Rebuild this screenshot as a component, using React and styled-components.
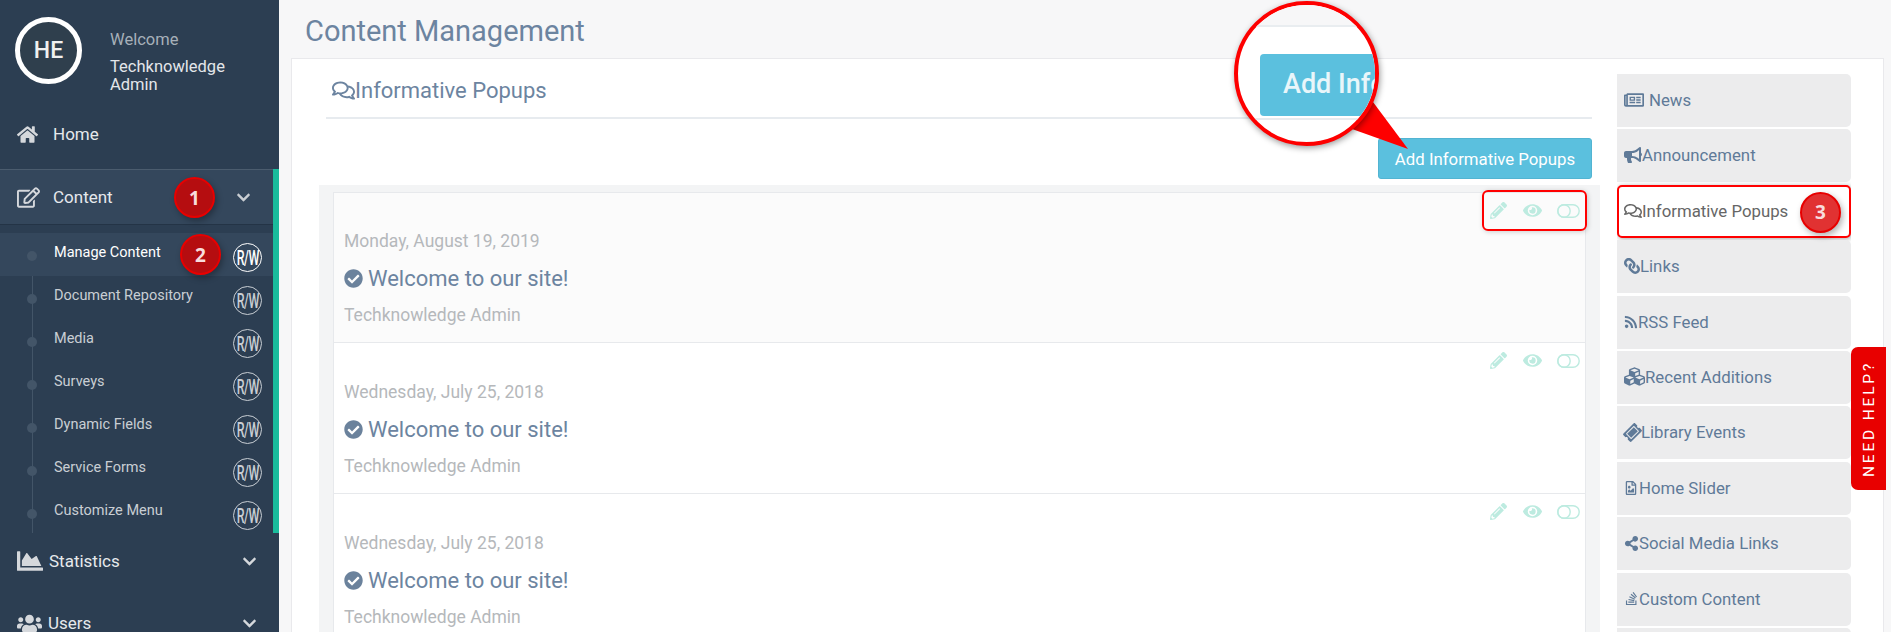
import React from 'react'
import styled, { createGlobalStyle } from 'styled-components'
import {
  FaHome, FaRegEdit, FaChevronDown, FaChartArea, FaUsers, FaRegNewspaper, FaBullhorn,
  FaRegComments, FaLink, FaRss, FaCubes, FaTicketAlt, FaRegFileImage, FaShareAlt,
  FaStackOverflow, FaPencilAlt, FaEye, FaCheckCircle,
} from 'react-icons/fa'

const subMenu = ['Manage Content', 'Document Repository', 'Media', 'Surveys', 'Dynamic Fields', 'Service Forms', 'Customize Menu']

const tabs = [
  { label: 'News', icon: FaRegNewspaper, width: 20, gap: 5 },
  { label: 'Announcement', icon: FaBullhorn, width: 18 },
  { label: 'Informative Popups', icon: FaRegComments, width: 18, active: true },
  { label: 'Links', icon: FaLink, width: 16, turn: 'scaleX(-1)' },
  { label: 'RSS Feed', icon: FaRss, width: 14 },
  { label: 'Recent Additions', icon: FaCubes, width: 21 },
  { label: 'Library Events', icon: FaTicketAlt, width: 17, turn: 'rotate(-45deg)' },
  { label: 'Home Slider', icon: FaRegFileImage, width: 14, gap: 1 },
  { label: 'Social Media Links', icon: FaShareAlt, width: 15 },
  { label: 'Custom Content', icon: FaStackOverflow, width: 15 },
  { label: '', icon: null },
]

const posts = [
  { date: 'Monday, August 19, 2019', first: true },
  { date: 'Wednesday, July 25, 2018' },
  { date: 'Wednesday, July 25, 2018' },
]

function ToggleIcon() {
  return (
    <svg width="23" height="14" viewBox="0 0 23 14" fill="none" stroke="#bdebe0" strokeWidth="1.4">
      <rect x="0.8" y="0.8" width="21.4" height="12.4" rx="6.2" />
      <circle cx="7" cy="7" r="6.2" />
    </svg>
  )
}

function App() {
  return (
    <Page>
      <GlobalStyle />
      <Sidebar>
        <Profile>
          <Avatar>HE</Avatar>
          <ProfileText>
            <Welcome>Welcome</Welcome>
            <UserName>Techknowledge Admin</UserName>
          </ProfileText>
        </Profile>

        <HomeRow>
          <FaHome size={21} />
          <span>Home</span>
        </HomeRow>

        <ContentGroup>
          <ContentRow>
            <FaRegEdit size={23} />
            <span>Content</span>
            <Chevron $x={243}><FaChevronDown size={15} /></Chevron>
            <Badge $left={174} $top={7}>1</Badge>
          </ContentRow>
          <SubList>
            {subMenu.map((name, i) => (
              <SubItem key={name} $active={i === 0}>
                <SubDot />
                <SubLabel $active={i === 0}>{name}</SubLabel>
                <RwBadge $active={i === 0}><span>R/W</span></RwBadge>
                {i === 0 && <Badge $left={180} $top={1}>2</Badge>}
              </SubItem>
            ))}
          </SubList>
        </ContentGroup>

        <MainRow>
          <FaChartArea size={26} />
          <span>Statistics</span>
          <Chevron $x={249}><FaChevronDown size={15} /></Chevron>
        </MainRow>
        <MainRow>
          <FaUsers size={25} />
          <span>Users</span>
          <Chevron $x={249}><FaChevronDown size={15} /></Chevron>
        </MainRow>
      </Sidebar>

      <Main>
        <PageTitle>Content Management</PageTitle>
        <Panel>
          <LeftColumn>
            <SectionHead>
              <FaRegComments size={23} />
              <span>Informative Popups</span>
            </SectionHead>
            <ButtonRow>
              <AddButton>Add Informative Popups</AddButton>
            </ButtonRow>
            <PostList>
              {posts.map((post, i) => (
                <Post key={i} $first={post.first}>
                  <PostActions>
                    <FaPencilAlt size={17} />
                    <FaEye size={19} />
                    <ToggleIcon />
                  </PostActions>
                  {post.first && <ActionsMark />}
                  <PostDate>{post.date}</PostDate>
                  <PostTitle>
                    <FaCheckCircle size={19} />
                    <span>Welcome to our site!</span>
                  </PostTitle>
                  <PostAuthor>Techknowledge Admin</PostAuthor>
                </Post>
              ))}
            </PostList>
          </LeftColumn>

          <TabColumn>
            {tabs.map((tab, i) => (
              <Tab key={i} $active={tab.active} $turn={tab.turn} $iconWidth={tab.width}>
                {tab.icon && <tab.icon />}
                <TabLabel $gap={tab.gap}>{tab.label}</TabLabel>
                {tab.active && <Badge $left={181} $top={5} $light>3</Badge>}
              </Tab>
            ))}
          </TabColumn>
        </Panel>
      </Main>

      <HelpTab><span>NEED HELP?</span></HelpTab>

      <CalloutArrow width="60" height="50" viewBox="0 0 60 50">
        <polygon points="22,0 1,27 57,47" fill="#fe0000" />
      </CalloutArrow>
      <Lens>
        <LensBand />
        <LensButton>Add Info</LensButton>
        <LensRule />
      </Lens>
    </Page>
  )
}

export default App

const GlobalStyle = createGlobalStyle`
  html, body {
    margin: 0;
    padding: 0;
    height: 100%;
    overflow: hidden;
  }
  body {
    font-family: Roboto, "Liberation Sans", sans-serif;
    background: #f7f7f8;
  }
  * { box-sizing: border-box; }
`

const Page = styled.div`
  position: relative;
  display: flex;
  width: 1891px;
  height: 632px;
  overflow: hidden;
`

const Sidebar = styled.aside`
  width: 279px;
  flex-shrink: 0;
  background: #2c3e52;
  color: #e6e9ec;
`

const Profile = styled.div`
  display: flex;
  height: 113px;
  padding: 17px 0 0 15px;
`

const Avatar = styled.div`
  width: 67px;
  height: 67px;
  border: 5px solid #fff;
  border-radius: 50%;
  background: #2f3f4d;
  color: #f0f0f0;
  display: flex;
  align-items: center;
  justify-content: center;
  font-size: 23px;
  font-weight: 500;
`

const ProfileText = styled.div`
  margin-left: 28px;
  padding-top: 14px;
  width: 130px;
`

const Welcome = styled.div`
  font-size: 16.5px;
  line-height: 18px;
  color: #a7b0b9;
  margin-bottom: 9px;
`

const UserName = styled.div`
  font-size: 16.5px;
  line-height: 18px;
  color: #e3e6ea;
`

const HomeRow = styled.div`
  display: flex;
  align-items: center;
  height: 56px;
  padding: 0 0 14px 17px;
  font-size: 17px;
  svg { color: #d5d8dc; margin-right: 15px; }
`

const ContentGroup = styled.div`
  border-right: 6px solid #1abc9c;
`

const ContentRow = styled.div`
  position: relative;
  display: flex;
  align-items: center;
  height: 56px;
  padding-left: 17px;
  background: #34475c;
  border-top: 1px solid #4b5c6e;
  border-bottom: 1px solid #243446;
  font-size: 17px;
  svg { color: #d5d8dc; margin-right: 13px; }
`

const Chevron = styled.span`
  position: absolute;
  left: ${(p) => p.$x - 7}px;
  top: 50%;
  margin-top: -7px;
  height: 15px;
  svg { display: block; color: #c9ced3; margin: 0; }
`

const Badge = styled.span`
  position: absolute;
  left: ${(p) => p.$left}px;
  top: ${(p) => p.$top}px;
  width: 41px;
  height: 41px;
  border-radius: 50%;
  border: 2px solid #e80000;
  background: ${(p) => (p.$light ? '#e13232' : '#b50d10')};
  color: #f8dcdc;
  font-size: 19px;
  font-weight: 700;
  font-family: "Open Sans", Roboto, sans-serif;
  display: flex;
  align-items: center;
  justify-content: center;
  box-shadow: 2px 3px 6px rgba(0, 0, 0, 0.3);
  z-index: 2;
`

const SubList = styled.div`
  position: relative;
  height: 308px;
  padding-top: 8px;
  &::before {
    content: '';
    position: absolute;
    left: 32px;
    top: 8px;
    bottom: 0;
    width: 1px;
    background: #435568;
  }
`

const SubItem = styled.div`
  position: relative;
  display: flex;
  align-items: center;
  height: 43px;
  padding-left: 54px;
  padding-bottom: 4px;
  background: ${(p) => (p.$active ? '#34475c' : 'transparent')};
`

const SubDot = styled.span`
  position: absolute;
  left: 27px;
  top: 18px;
  width: 10px;
  height: 10px;
  border-radius: 50%;
  background: #435568;
`

const SubLabel = styled.span`
  font-size: 14.5px;
  color: ${(p) => (p.$active ? '#fff' : '#c9ced4')};
`

const RwBadge = styled.span`
  position: absolute;
  left: 233px;
  top: 10px;
  width: 29px;
  height: 29px;
  border-radius: 50%;
  border: 1.5px solid ${(p) => (p.$active ? '#fff' : '#c9ced4')};
  color: ${(p) => (p.$active ? '#fff' : '#c9ced4')};
  display: flex;
  align-items: center;
  justify-content: center;
  span {
    font-size: 20px;
    font-weight: 500;
    transform: scaleX(0.62);
    white-space: nowrap;
    letter-spacing: -0.8px;
  }
`

const MainRow = styled.div`
  position: relative;
  display: flex;
  align-items: center;
  height: 56px;
  margin-bottom: 6px;
  padding-left: 17px;
  font-size: 17px;
  svg { color: #d5d8dc; margin-right: 6px; }
`

const Main = styled.main`
  flex: 1;
  min-width: 0;
  padding-left: 12px;
`

const PageTitle = styled.h1`
  margin: 0;
  height: 58px;
  padding: 13px 0 0 14px;
  font-size: 29px;
  line-height: 36px;
  font-weight: 400;
  color: #6c84a0;
`

const Panel = styled.section`
  display: flex;
  width: 1593px;
  height: 600px;
  background: #fff;
  border: 1px solid #e9e9ec;
`

const LeftColumn = styled.div`
  width: 1325px;
  flex-shrink: 0;
`

const SectionHead = styled.div`
  display: flex;
  align-items: center;
  margin: 0 25px 0 34px;
  height: 60px;
  padding: 4px 0 0 6px;
  border-bottom: 2px solid #e7ebef;
  font-size: 22px;
  color: #6c84a0;
`

const ButtonRow = styled.div`
  display: flex;
  justify-content: flex-end;
  padding: 19px 25px 6px 0;
`

const AddButton = styled.button`
  width: 214px;
  height: 41px;
  border: 1px solid #52b4d2;
  border-radius: 3px;
  background: #5bc0de;
  color: #fff;
  font-family: inherit;
  font-size: 16.8px;
  font-weight: 400;
  padding: 0;
`

const PostList = styled.div`
  margin-left: 27px;
  width: 1281px;
  height: 460px;
  padding: 7px 14px 0;
  background: #f3f4f5;
`

const Post = styled.article`
  position: relative;
  height: 151px;
  padding: ${(p) => (p.$first ? 39 : 40)}px 8px 0 10px;
  background: ${(p) => (p.$first ? '#fbfbfb' : '#fff')};
  border: 1px solid #e7e9ec;
  border-top-width: ${(p) => (p.$first ? 1 : 0)}px;
`

const PostActions = styled.div`
  position: absolute;
  right: 5px;
  top: 8px;
  width: 90px;
  height: 19px;
  display: flex;
  align-items: center;
  justify-content: space-between;
  color: #bdebe0;
`

const ActionsMark = styled.div`
  position: absolute;
  right: -2px;
  top: -3px;
  width: 105px;
  height: 41px;
  border: 2px solid #f00;
  border-radius: 6px;
  box-shadow: 1px 1px 5px rgba(0, 0, 0, 0.18);
`

const PostDate = styled.div`
  font-size: 17.5px;
  line-height: 18px;
  color: #b5b8bb;
`

const PostTitle = styled.div`
  display: flex;
  align-items: center;
  margin-top: 15px;
  height: 26px;
  font-size: 22px;
  color: #6c84a0;
  svg { margin-right: 5px; color: #6b829c; }
`

const PostAuthor = styled.div`
  margin-top: 15px;
  font-size: 17.5px;
  line-height: 18px;
  color: #b5b8bb;
`

const TabColumn = styled.div`
  margin-top: 15px;
  width: 234px;
  height: 585px;
  overflow: hidden;
`

const Tab = styled.div`
  position: relative;
  display: flex;
  align-items: center;
  height: 53px;
  margin-bottom: 2.4px;
  padding: 0 0 1px ${(p) => (p.$active ? 5 : 7)}px;
  border-radius: ${(p) => (p.$active ? '5px' : '0 5px 5px 0')};
  background: ${(p) => (p.$active ? '#fff' : '#ececed')};
  color: ${(p) => (p.$active ? '#666' : '#5f7a98')};
  border: ${(p) => (p.$active ? '2px solid #f00' : '0')};
  box-shadow: ${(p) => (p.$active ? '1px 1px 5px rgba(0, 0, 0, 0.35)' : 'none')};
  font-size: 16.8px;
  svg {
    flex-shrink: 0;
    width: ${(p) => p.$iconWidth}px;
    height: auto;
    transform: ${(p) => p.$turn || 'none'};
  }
`

const TabLabel = styled.span`
  margin-left: ${(p) => p.$gap || 0}px;
`

const HelpTab = styled.div`
  position: absolute;
  left: 1851px;
  top: 347px;
  width: 35px;
  height: 143px;
  border-radius: 7px 0 0 7px;
  background: #e80000;
  display: flex;
  align-items: center;
  justify-content: center;
  span {
    display: block;
    transform: rotate(-90deg);
    white-space: nowrap;
    color: #fff;
    font-size: 15.5px;
    font-weight: 400;
    letter-spacing: 2.8px;
  }
`

const CalloutArrow = styled.svg`
  position: absolute;
  left: 1351px;
  top: 102px;
`

const Lens = styled.div`
  position: absolute;
  left: 1234px;
  top: 1px;
  width: 145px;
  height: 145px;
  border-radius: 50%;
  border: 4px solid #fe0000;
  background: #fff;
  overflow: hidden;
  box-shadow: 1px 2px 6px rgba(0, 0, 0, 0.4);
`

const LensBand = styled.div`
  position: absolute;
  left: 0;
  top: 0;
  width: 100%;
  height: 22px;
  background: #f7f7f8;
  border-bottom: 2px solid #e9edf0;
`

const LensButton = styled.div`
  position: absolute;
  left: 22px;
  top: 49px;
  width: 160px;
  height: 62px;
  padding-left: 23px;
  border-radius: 4px;
  background: #5bc0de;
  color: #e9f6fa;
  font-size: 27px;
  font-weight: 500;
  line-height: 60px;
`

const LensRule = styled.div`
  position: absolute;
  left: 0;
  top: 113px;
  width: 100%;
  height: 30px;
  border-top: 2px solid #e7ebef;
`
